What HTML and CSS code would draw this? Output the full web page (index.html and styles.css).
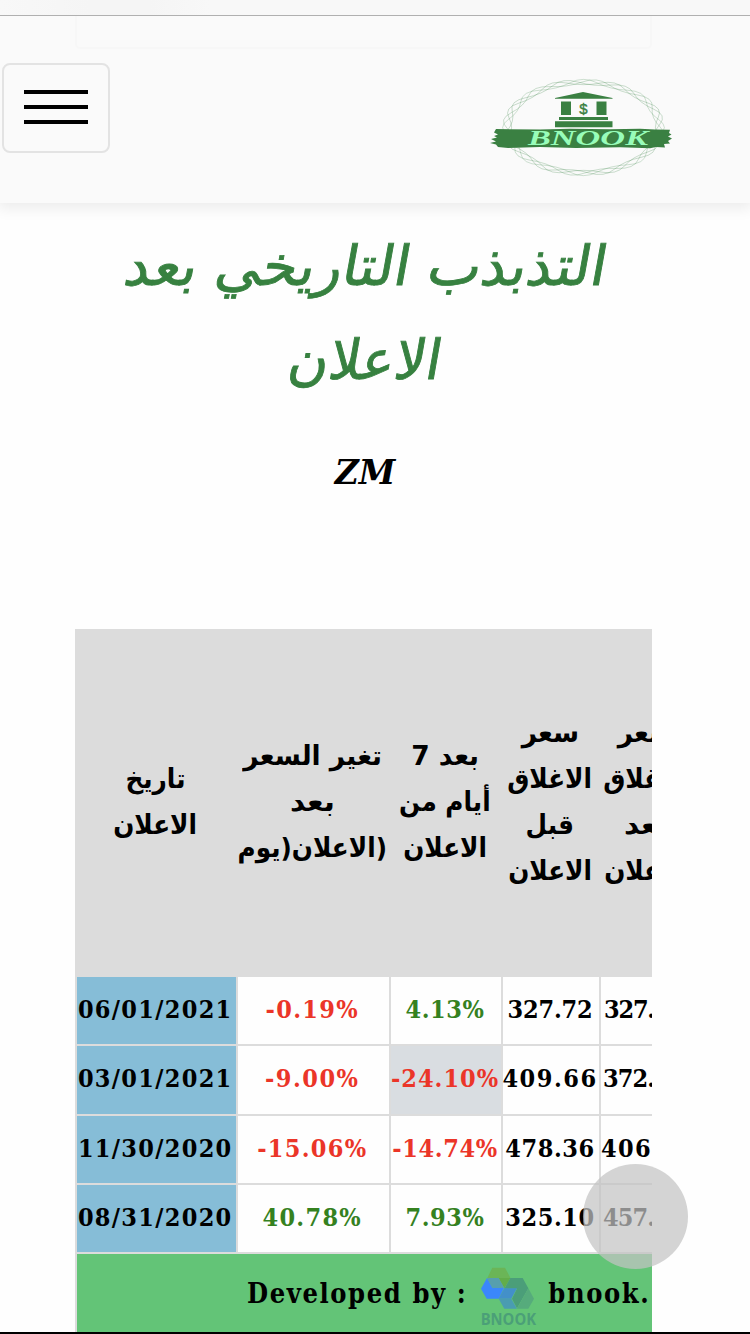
FILE: index.html
```html
<!DOCTYPE html>
<html lang="ar">
<head>
<meta charset="utf-8">
<title>BNOOK</title>
<link rel="stylesheet" href="styles.css">
</head>
<body>
<div class="topbar"></div>
<header class="header">
  <div class="ghost"></div>
  <button class="menu" aria-label="menu"><i></i><i></i><i></i></button>
  <svg class="logo" width="190" height="108" viewBox="488 74 190 108">
    <defs><path id="wave" d="M43.500-7.650Q50 0 43.500 7.650T36.200 25.350T25.350 36.200T7.650 43.500T-7.650 43.500T-25.350 36.200T-36.200 25.350T-43.500 7.650T-43.500-7.650T-36.200-25.350T-25.350-36.200T-7.650-43.500T7.650-43.500T25.350-36.200T36.200-25.350T43.500-7.650"/></defs>
    <g transform="translate(583.500 127.500) scale(1.73 1.030)" fill="none" stroke="#3c8446" stroke-width=".5" stroke-opacity=".35">
      <use href="#wave"/><use href="#wave" transform="rotate(9)"/><use href="#wave" transform="rotate(22.500)"/><use href="#wave" transform="rotate(31)"/>
    </g>
    <g fill="#3a8042">
      <path d="M555 98.700V98l28-6 29.500 6v.700zM561 101.500h10V115h-10zM596.500 101.500h10V115h-10zM559 117h49v3h-49zM555 121.300h57.500v6H555z"/>
      <path d="M496 129L540 129.500 570 128.700 610 129.300 640 128.700 655 129.500 670 129.700 669 133 671.500 134.500 668 136.500 672 138.500 668 141 670 143.500 664 144 665 147.500 656 147 650 148.300 620 147.300 576 148 540 147 508 148 498 147 496 144.500 490 143 496 141.500 491 139 497 137.500 494 136 498 134.500 494 132.500z"/>
    </g>
    <text class="logo-dollar" x="583.500" y="113.500" text-anchor="middle">$</text>
    <text class="logo-name" x="528" y="145" textLength="120" lengthAdjust="spacingAndGlyphs">BNOOK</text>
  </svg>
</header>
<main class="page">
  <h1 class="title" dir="rtl"><span class="t1">التذبذب التاريخي بعد</span><span class="t2">الاعلان</span></h1>
  <h2 class="ticker"><span>ZM</span></h2>
  <section class="table">
    <div class="head" dir="rtl"><span>تاريخ</span><span>الاعلان</span></div>
    <div class="head" dir="rtl"><span class="wide">تغير السعر</span><span class="wider">بعد</span><span>(الاعلان(يوم</span></div>
    <div class="head" dir="rtl"><span class="wide">بعد 7</span><span>أيام من</span><span>الاعلان</span></div>
    <div class="head" dir="rtl"><span class="wide">سعر</span><span>الاغلاق</span><span>قبل</span><span>الاعلان</span></div>
    <div class="head" dir="rtl"><span class="wide">سعر</span><span>الاغلاق</span><span class="wider">بعد</span><span>الاعلان</span></div>

    <div class="cell date">06/01/2021</div><div class="cell red">-0.19%</div><div class="cell green tight">4.13%</div><div class="cell tighter">327.72</div><div class="cell last">327.</div>
    <div class="cell date">03/01/2021</div><div class="cell red loose">-9.00%</div><div class="cell red marked">-24.10%</div><div class="cell loose">409.66</div><div class="cell last l2">372.</div>
    <div class="cell date">11/30/2020</div><div class="cell red">-15.06%</div><div class="cell red tight">-14.74%</div><div class="cell tight">478.36</div><div class="cell last l3">406</div>
    <div class="cell date">08/31/2020</div><div class="cell green">40.78%</div><div class="cell green tight">7.93%</div><div class="cell tight">325.10</div><div class="cell last l2">457.</div>
    <footer class="foot">
      <span class="dev">Developed by :</span>
      <svg class="mark" width="57" height="62" viewBox="150 405 171 186">
        <path fill="#6bb557" d="M187 413h38l16 30-18 31-17-30h-34z"/>
        <path fill="#62ad4a" d="M206 444h35l-18 30z"/>
        <path fill="#3b87fb" d="M171 444l17 30h34l-16 32h-36l-17-30z"/>
        <path fill="#579fae" d="M171 444h35l17 30h-35z"/>
        <path fill="#4b9e79" d="M241 444h37l17 31-34 60-15-29 15-30h-38z"/>
        <path fill="#56ab7c" d="M295 475l17 31-17 30h-34z"/>
        <path fill="#4a9cb1" d="M206 506h38l17 30h-38z"/>
        <path fill="#4390c9" d="M223 475h38l-17 31h-38z"/>
        <text class="mark-name" x="152" y="584" textLength="166" lengthAdjust="spacingAndGlyphs">BNOOK</text>
      </svg>
      <span class="site">bnook.</span>
    </footer>
  </section>
</main>
<div class="touch"></div>
<div class="bottomline"></div>
</body>
</html>
```
FILE: styles.css
```css
* { box-sizing: border-box; }
body { margin: 0; width: 750px; height: 1334px; overflow: hidden; position: relative; background: #fefefe; color: #000; font-family: "DejaVu Serif Condensed", "DejaVu Serif", serif; display: flex; flex-direction: column; }
.topbar { height: 16px; flex: none; background: linear-gradient(90deg, #f8f8f8, #f5f5f5 12%, #f5f5f5 20%, #f8f8f8 28%); border-bottom: 1px solid #b0b0b0; }
.header { height: 187px; flex: none; position: relative; background: #fafafa; box-shadow: 0 3px 14px 2px rgba(0,0,0,.08); clip-path: inset(0 0 -30px 0); display: flex; justify-content: space-between; align-items: flex-start; padding: 47px 72px 0 2px; }
.ghost { position: absolute; left: 75px; top: 0; width: 577px; height: 33px; border: 2px solid #f7f7f7; border-top: 0; border-radius: 0 0 5px 5px; }
.menu { width: 108px; height: 90px; border: 2px solid #e3e3e3; border-radius: 8px; background: none; padding: 0 20px 2px; display: flex; flex-direction: column; justify-content: center; gap: 10.500px; }
.menu i { height: 4.500px; background: #000; }
.logo { margin-top: 11px; }
.logo-dollar { font: 15px "Liberation Sans", sans-serif; fill: #3a8042; stroke: #3a8042; stroke-width: .4; }
.logo-name { font: italic bold 20px "Liberation Serif", serif; fill: #98fdb9; }
.page { flex: none; }
.title { margin: 0; height: 206px; padding-top: 16px; width: 732px; display: flex; flex-direction: column; align-items: center; font: 55px/94px "DejaVu Sans Condensed", "DejaVu Sans", sans-serif; color: #378140; }
.title span { display: block; white-space: nowrap; -webkit-text-stroke: .800px #378140; }
.t1 { transform: scaleX(1.145) skewX(-9deg); }
.t2 { transform: scaleX(1.110) skewX(-9deg); }
.ticker { margin: 0; width: 730px; height: 220px; padding-top: 37px; text-align: center; font: italic bold 34px/52px "DejaVu Serif Condensed", "DejaVu Serif", serif; }
.ticker span { display: inline-block; transform: scaleX(1.080); }
.table { margin-left: 75px; width: 577px; overflow: hidden; padding-left: 2px; background: #dcdcdc; display: grid; grid-template-columns: 158.500px 151.500px 110px 96px 92px; column-gap: 2px; row-gap: 2px; grid-template-rows: 346px repeat(4, 67.300px) 78px; }
.head { display: flex; flex-direction: column; align-items: center; justify-content: center; padding-right: 2px; font: bold 27px/46px "DejaVu Sans Condensed", "DejaVu Sans", sans-serif; }
.head span { white-space: nowrap; transform: scaleX(1.020); }
.head .wide { transform: scaleX(1.090); }
.head .wider { transform: scaleX(1.220); }
.cell { background: #fefefe; display: flex; align-items: center; justify-content: center; font-size: 25px; font-weight: bold; letter-spacing: 1.300px; white-space: nowrap; padding: 0 2px 2px 0; }
.tight { letter-spacing: .600px; }
.tighter { letter-spacing: -.200px; }
.loose { letter-spacing: 1.500px; }
.date { background: #86bdd7; }
.red { color: #eb3528; }
.green { color: #35811f; }
.marked { background: #d9dde1; letter-spacing: 1px; }
.last { justify-content: flex-start; padding-left: 3px; letter-spacing: -1.200px; }
.l2 { padding-left: 2px; letter-spacing: -.900px; }
.l3 { padding-left: 0; letter-spacing: 1.300px; }
.foot { grid-column: 1 / -1; background: #63c477; display: flex; align-items: center; padding-left: 170px; font-size: 27px; font-weight: bold; letter-spacing: 1.600px; white-space: nowrap; }
.mark { margin-left: 13px; margin-top: 5px; flex: none; }
.mark-name { font: bold 46px "Open Sans", sans-serif; fill: #4b9f78; letter-spacing: 0; }
.site { margin-left: 11px; }
.touch { position: absolute; left: 583px; top: 1164px; width: 105px; height: 105px; border-radius: 50%; background: rgba(195,195,195,.72); }
.bottomline { position: absolute; left: 0; top: 1332px; width: 750px; height: 2px; background: #000; }
```
